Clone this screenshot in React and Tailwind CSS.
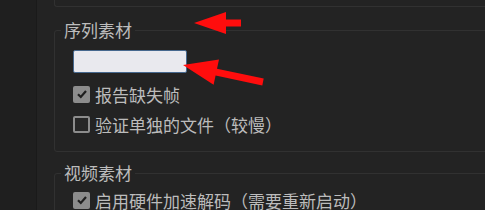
import React from "react";

function Check({ checked }) {
  return checked ? (
    <span className="flex h-[17px] w-[17px] flex-shrink-0 items-center justify-center rounded-[2px] bg-[#8c8c8c]">
      <svg width="12" height="12" viewBox="0 0 12 12">
        <path d="M2 6.2 L4.8 9 L10 3" fill="none" stroke="#1f1f1f" strokeWidth="2.2" />
      </svg>
    </span>
  ) : (
    <span className="block h-[17px] w-[17px] flex-shrink-0 rounded-[2px] border-2 border-[#8c8c8c] bg-[#262626]" />
  );
}

function Row({ checked, label }) {
  return (
    <div className="flex h-[30px] items-center gap-[5px] pl-[18px]">
      <Check checked={checked} />
      <span className="text-[17px] leading-none text-[#bcbcbc]">{label}</span>
    </div>
  );
}

function Group({ title, children, className }) {
  return (
    <fieldset className={`mr-[-20px] rounded-[3px] border border-[#313131] ${className}`}>
      <legend className="ml-[6px] px-[3px] text-[17px] leading-[20px] text-[#bcbcbc]">{title}</legend>
      {children}
    </fieldset>
  );
}

export default function App() {
  return (
    <div
      className="relative flex h-[210px] w-[485px] overflow-hidden bg-[#232323]"
      style={{ fontFamily: '"Noto Sans CJK SC", "Noto Sans", sans-serif' }}
    >
      <div className="w-[37px] flex-shrink-0 border-r border-[#1a1a1a] bg-[#1f1f1f]" />
      <div className="flex-1 overflow-hidden pl-[17px]">
        <div className="mr-[-20px] h-[7px] rounded-bl-[3px] border-b border-l border-[#313131]" />
        <Group title="序列素材" className="mt-[13px]">
          <div className="pl-[18px] pt-[10px]">
            <div className="h-[23px] w-[114px] rounded-[2px] border border-[#46688e] bg-[#e9e9ee]" />
          </div>
          <div className="pt-[6px] pb-[12px]">
            <Row checked label="报告缺失帧" />
            <Row checked={false} label="验证单独的文件（较慢）" />
          </div>
        </Group>
        <Group title="视频素材" className="mt-[11px]">
          <div className="pt-[2px] pb-[10px]">
            <Row checked label="启用硬件加速解码（需要重新启动）" />
          </div>
        </Group>
      </div>
      <svg className="pointer-events-none absolute left-0 top-0" width="485" height="210">
        <polygon
          points="194,23 226,12 226,19.5 241,19.5 241,26.5 226,26.5 226,34"
          fill="#ff0d0d"
        />
        <polygon
          points="183,65 219,59.4 217,68.7 263.7,78.6 262.3,85.4 215.6,75.5 213.6,84.8"
          fill="#ff0d0d"
        />
      </svg>
    </div>
  );
}
